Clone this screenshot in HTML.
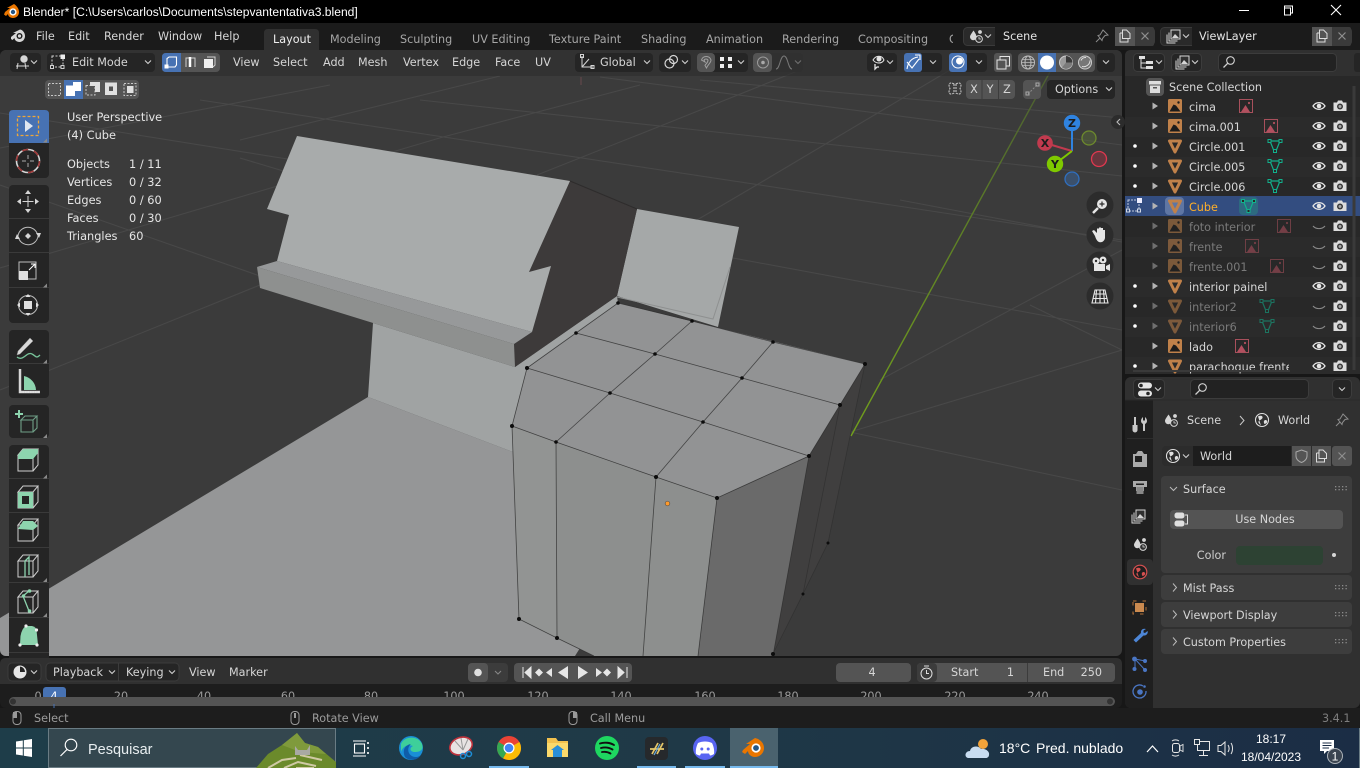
<!DOCTYPE html>
<html><head><meta charset="utf-8"><title>Blender</title>
<style>
html,body{margin:0;padding:0;background:#161616;width:1360px;height:768px;overflow:hidden}
svg{position:absolute;left:0;top:0;display:block}
text{font-family:"DejaVu Sans",sans-serif;font-size:11.2px;fill:#d6d6d6}
.w text,text.w{font-family:"Liberation Sans",sans-serif}
.dim{fill:#9c9c9c}
.hd{fill:#a6a6a6}
.sm{font-size:11.35px;fill:#e6e6e6}
.ol{fill:none;stroke:#d8d8d8;stroke-width:1}
.ch{fill:none;stroke:#d0d0d0;stroke-width:1.1}
</style></head><body>
<svg width="1360" height="768" viewBox="0 0 1360 768" xmlns="http://www.w3.org/2000/svg">
<defs>
<path id="ch" class="ch" d="M-3-1.5 0 1.5 3-1.5"/>
<path id="ar" d="M-2.5-3.5 3 0-2.5 3.5z" fill="#b4b4b4"/>
<g id="img"><rect x="-7" y="-7" width="14" height="14" rx="1.5" fill="#c0814a"/><path d="M-5.5 5.5-1.5-1.5 1-.5 5.5 5.5z" fill="#1c1c1c"/><circle cx="3.5" cy="-3.5" r="1.2" fill="#1c1c1c"/></g>
<g id="tri"><path d="M-5.5-5 5.500-5 0 6z" fill="none" stroke="#c0814a" stroke-width="3" stroke-linejoin="round"/></g>
<g id="sub"><rect x="-6.500" y="-6.500" width="13" height="13" fill="none" stroke="#a8505c" stroke-width="1"/><path d="M-5 6-.5-1 4 6z" fill="#b2505f"/><circle cx="3" cy="-3" r="1.1" fill="#b2505f"/></g>
<g id="msh"><path d="M-5-5H5L1 5H-1z" fill="none" stroke="#12b08c" stroke-width="1.2"/><rect x="-7" y="-6.500" width="3" height="3" fill="#282828" stroke="#12b08c"/><rect x="4" y="-6.500" width="3" height="3" fill="#282828" stroke="#12b08c"/><rect x="-1.500" y="3.500" width="3" height="3" fill="#282828" stroke="#12b08c"/></g>
<g id="eye"><path d="M-6 0C-3-4.500 3-4.500 6 0 3 4.500-3 4.500-6 0z" fill="none" stroke="#e6e6e6" stroke-width="1.300"/><circle r="2.300" fill="#e6e6e6"/></g>
<path id="eyc" d="M-6-1C-3 2.500 3 2.500 6-1" fill="none" stroke="#8a8a8a" stroke-width="1.100"/>
<g id="cam"><path d="M-6.500-3.500H-3L-2-5.500H2L3-3.500H6.500V5H-6.500z" fill="#dcdcdc"/><circle cy=".5" r="3" fill="#3a3a3a"/><circle cy=".5" r="1.500" fill="#a8a8a8"/></g>
<g id="mouse"><rect x="-4" y="-6.500" width="8" height="13" rx="3.500" fill="none" stroke="#9a9a9a"/></g>
<g id="vdots" fill="#8c8c8c"><rect x="0" y="0" width="1.300" height="1.300"/><rect x="3.500" y="0" width="1.300" height="1.300"/><rect x="7" y="0" width="1.300" height="1.300"/><rect x="10.500" y="0" width="1.300" height="1.300"/><rect x="0" y="3" width="1.300" height="1.300"/><rect x="3.500" y="3" width="1.300" height="1.300"/><rect x="7" y="3" width="1.300" height="1.300"/><rect x="10.500" y="3" width="1.300" height="1.300"/></g>
<g id="globe"><circle r="6.500" fill="none" stroke="#e0e0e0" stroke-width="1.100"/><path d="M-4-3.500C-1-5 1-4 .5-2-.5 0-3 0-3.500 1.500-4 3-2 4-1 5.500M3 0C5 0 5.500 1 5 2.500 4 4 2 4.500 2 3 1.500 1.500 2 .5 3 0z" fill="#e0e0e0"/></g>
<g id="sceneic"><path d="M-2.500-5.500C-.5-2.500.5-1 .5 1A3.200 3.200 0 0 1-6 1C-6-1-4-3-2.500-5.500z" fill="#d6d6d6"/><circle cx="4" cy="-4" r="1.900" fill="#d6d6d6"/><circle cx="3" cy="3" r="3.400" fill="#303030" stroke="#d6d6d6"/><path d="M3 1V3H5" fill="none" stroke="#d6d6d6" stroke-width=".8"/></g>
<g id="copy"><path d="M-5-3H-2.500M-5-3V6H3V2.500M-2.500-6H1.500L5-2.500V2.500H-2.500z" fill="none" stroke="#dcdcdc"/></g>
<g id="x"><path d="M-3.500-3.500 3.500 3.500M3.500-3.500-3.500 3.500" stroke="#8f8f8f" stroke-width="1.200"/></g>
<g id="pin"><path d="M1-6 6-1 3-.5 .5 2.500 0 4.500-4-.5-2-1-.5-3.500zM-2 2-6 6" fill="none" stroke="#8c8c8c"/></g>
<g id="layers"><rect x="-3" y="-6" width="9" height="9" fill="#303030" stroke="#d6d6d6"/><path d="M-5-3.500V5H3.500M-7-1.500V7H1.500" fill="none" stroke="#d6d6d6"/><path d="M-2 2 1-2 3 0 5 2z" fill="#d6d6d6"/></g>
<g id="lens"><circle cx="1.500" cy="-1.500" r="3.800" fill="none" stroke="#d0d0d0" stroke-width="1.100"/><path d="M-1.300 1.300-5.500 5.500" stroke="#d0d0d0" stroke-width="1.300"/></g>
<path id="cube" d="M-10-6H5L10-12H-5zM-10-6V10H5V-6M5 10 10 4V-12" fill="none" stroke="#cfcfcf" stroke-width="1"/>
<clipPath id="vp"><rect x="0" y="50" width="1122" height="606" rx="6"/></clipPath>
<clipPath id="sb"><rect x="49" y="729" width="287" height="39"/></clipPath>
<clipPath id="rul"><rect x="0" y="684" width="1122" height="13"/></clipPath>
<linearGradient id="tb" x1="0" x2="1" y1="0" y2="0"><stop offset="0" stop-color="#1e3d49"/><stop offset=".5" stop-color="#1f3947"/><stop offset="1" stop-color="#1b2d45"/></linearGradient>
<linearGradient id="gl" x1="0" x2="0" y1="0" y2="1"><stop offset="0" stop-color="#4a5a34"/><stop offset=".45" stop-color="#5d7f26"/><stop offset="1" stop-color="#72a01c"/></linearGradient>
</defs>

<!-- frame -->
<rect width="1360" height="768" fill="#171717"/>
<rect width="1360" height="23" fill="#000"/>
<rect y="23" width="1360" height="27" fill="#1b1b1b"/>

<!-- viewport -->
<g clip-path="url(#vp)">
<rect y="50" width="1122" height="606" fill="#3b3b3b"/>
<g stroke="#484848" stroke-width="1.100" fill="none">
<path d="M0 113 300 161M0 185 300 290M240 158 300 176M200 100 1122 240M420 100 1122 176M717 255 1122 330M850 432 1122 490M700 80 1122 118M600 77 1122 145M900 200 1122 242M1030 305 1122 350"/>
<path d="M0 148 330 85M240 140 500 76M50 370 260 285M0 390 50 370M0 268 443 137 640 85M537 175 663 125 800 70M697 220 760 183 950 70M850 432 1122 350M880 380 1122 250"/>
</g>
<path d="M851 436 1062 50" stroke="url(#gl)" stroke-width="1.400"/>
<path d="M581 77V85" stroke="#6a4a4e"/>
<rect y="50" width="1122" height="26" fill="#2f2f2f" opacity=".72"/>
<!-- floor -->
<path d="M368 397 513 452 519 619 557 638 594 656H0V618z" fill="#959697"/>
<path d="M575 656 580 648 594 656z" fill="#3c3c3c"/>
<!-- pillar -->
<path d="M373 323 515 367 617 296 618 303 527 368 512 426 513 452 368 397z" fill="#a0a3a3"/>
<!-- plate -->
<path d="M637 209 739 227 718 327 617 296z" fill="#a5a8a8"/>
<path d="M617 297 713 319 730 267" fill="none" stroke="#8e9090"/>
<!-- dark side -->
<path d="M570 181 637 209 617 296 515 367 514 344 532 332 551 266 529 272z" fill="#3d3a3a"/>
<path d="M570 181 637 209" stroke="#2e2c2c"/>
<!-- upper -->
<path d="M297 136 570 181 529 272 551 266 532 332 277 261 289 215 267 209z" fill="#a8abab"/>
<path d="M257 267 277 261 532 332 514 344z" fill="#97999a"/>
<path d="M257 267 514 344 515 367 260 288z" fill="#8e908f"/>
<!-- box -->
<path d="M618 303 865 364 840 405 809 456 717 498 656 477 556 442 512 426 527 368z" fill="#929394"/>
<path d="M512 426 556 442 656 477 717 498 698 656H594L557 638 519 619z" fill="#8d8f8e"/>
<path d="M512 426 556 442 557 638 519 619z" fill="#929493"/>
<path d="M717 498 809 456 773 656H698z" fill="#6a6a6a"/>
<path d="M809 456 840 405 865 364 828 543 803 594 773 656z" fill="#403f3f"/>
<g fill="none" stroke="#303030" stroke-width=".8" opacity=".8">
<path d="M618 303 692 321 773 342 865 364 840 405 809 456 717 498 656 477 556 442 512 426 527 368 576 333z"/>
<path d="M576 333 655 354 742 378 840 405M527 368 610 393 703 422 809 456M692 321 655 354 610 393 556 442M773 342 742 378 703 422 656 477"/>
<path d="M512 426 519 619 557 638 594 656M556 442 557 638M656 477 643 656M717 498 698 656M809 456 773 656M840 405 803 594 773 654M865 364 828 543 803 594"/>
</g>
<g fill="#0c0c0c">
<circle cx="618" cy="303" r="1.800"/><circle cx="692" cy="321" r="1.800"/><circle cx="773" cy="342" r="1.800"/><circle cx="865" cy="364" r="2"/>
<circle cx="576" cy="333" r="1.800"/><circle cx="655" cy="354" r="1.800"/><circle cx="742" cy="378" r="1.800"/><circle cx="840" cy="405" r="2"/>
<circle cx="527" cy="368" r="2"/><circle cx="610" cy="393" r="1.800"/><circle cx="703" cy="422" r="1.800"/><circle cx="809" cy="456" r="2"/>
<circle cx="512" cy="426" r="2"/><circle cx="556" cy="442" r="1.800"/><circle cx="656" cy="477" r="2"/><circle cx="717" cy="498" r="2"/>
<circle cx="519" cy="619" r="2"/><circle cx="557" cy="638" r="2"/><circle cx="773" cy="654" r="2"/><circle cx="803" cy="594" r="1.500"/><circle cx="828" cy="543" r="1.500"/>
</g>
<circle cx="667.500" cy="503.500" r="2.300" fill="#ff9a2a" stroke="#555" stroke-width=".7"/>
</g>

<!-- title bar -->
<g transform="translate(11,11)"><path d="M-6 1-1-3-4-3 3-7C6-5 8-2 8 1 8 5 5 7 2 7-1 7-3 5-3 3L-5 5-7 3.500z" fill="#ea7600"/><circle cx="2" cy="1" r="3.600" fill="#fff"/><circle cx="2" cy="1" r="2.200" fill="#265787"/></g>
<text class="w" x="23" y="16" style="font-size:12.100px;fill:#fff">Blender* [C:\Users\carlos\Documents\stepvantentativa3.blend]</text>
<path d="M1239 10.500H1249" stroke="#fff"/>
<path d="M1284.500 8.500V6.500H1292.500V13.500H1290.500M1284.500 8.500H1290.500V15.500H1284.500z" transform="translate(0,-.5)" fill="none" stroke="#fff"/>
<path d="M1331 5 1341 15M1341 5 1331 15" stroke="#fff" stroke-width="1.100"/>

<!-- top bar -->
<g transform="translate(18,36)"><path d="M-7 1-2-3-5-3 2-6.500C5-6 7-3 7 0 7 3.500 4.500 6 1.500 6-1.500 6-3.500 4-3.500 2L-5.500 4-7 3z" fill="#d8d8d8"/><circle cx="1.500" cy="0" r="3" fill="#1b1b1b"/><circle cx="1.500" cy="0" r="1.600" fill="#d8d8d8"/></g>
<text x="36" y="40">File</text><text x="68" y="40">Edit</text><text x="104" y="40">Render</text><text x="158" y="40">Window</text><text x="214" y="40">Help</text>
<path d="M264 50V33Q264 29 268 29H315Q319 29 319 33V50z" fill="#303030"/>
<text x="273" y="43" style="fill:#eee">Layout</text>
<g class="hd"><text class="hd" x="330" y="43">Modeling</text><text class="hd" x="400" y="43">Sculpting</text><text class="hd" x="472" y="43">UV Editing</text><text class="hd" x="549" y="43">Texture Paint</text><text class="hd" x="641" y="43">Shading</text><text class="hd" x="706" y="43">Animation</text><text class="hd" x="782" y="43">Rendering</text><text class="hd" x="858" y="43">Compositing</text><text class="hd" x="949" y="43">G</text></g>
<rect x="953" y="26" width="10" height="22" fill="#1b1b1b"/>
<!-- scene field -->
<rect x="963.500" y="27.500" width="191" height="18" rx="4" fill="#2a2a2a" stroke="#3a3a3a"/>
<rect x="995" y="27" width="120" height="19" fill="#1b1b1b"/>
<rect x="1115" y="27" width="20" height="19" fill="#545454"/>
<rect x="1135" y="27" width="19" height="19" fill="#3a3a3a" rx="2"/>
<use href="#sceneic" x="976" y="36"/><use href="#ch" x="988" y="36"/>
<text x="1003" y="40" style="fill:#e4e4e4">Scene</text>
<use href="#pin" x="1102" y="36"/><use href="#copy" x="1125" y="36"/><use href="#x" x="1145" y="36"/>
<rect x="1160.500" y="27.500" width="191" height="18" rx="4" fill="#2a2a2a" stroke="#3a3a3a"/>
<rect x="1192" y="27" width="120" height="19" fill="#1b1b1b"/>
<rect x="1312" y="27" width="20" height="19" fill="#545454"/>
<rect x="1332" y="27" width="19" height="19" fill="#3a3a3a" rx="2"/>
<use href="#layers" x="1174" y="36"/><use href="#ch" x="1186" y="36"/>
<text x="1199" y="40" style="fill:#e4e4e4">ViewLayer</text>
<use href="#copy" x="1322" y="36"/><use href="#x" x="1342" y="36"/>

<!-- viewport header -->
<g fill="#252525">
<rect x="10" y="53" width="31" height="19" rx="4"/>
<rect x="47" y="53" width="108" height="19" rx="4"/>
<rect x="575" y="53" width="78" height="19" rx="4"/>
<rect x="659" y="53" width="32" height="19" rx="4"/>
<rect x="697" y="53" width="51" height="19" rx="4"/>
<rect x="753" y="53" width="50" height="19" rx="4" fill="#303030"/>
<rect x="867" y="53" width="30" height="19" rx="4"/>
<rect x="904" y="53" width="38" height="19" rx="4"/>
<rect x="949" y="53" width="38" height="19" rx="4"/>
<rect x="1097" y="53" width="18" height="19" rx="4"/>
</g>
<rect x="697" y="53" width="18" height="19" rx="4" fill="#545454"/>
<rect x="753" y="53" width="19" height="19" rx="4" fill="#545454"/>
<rect x="904" y="53" width="18" height="19" rx="3" fill="#4772b3"/>
<rect x="949" y="53" width="18" height="19" rx="3" fill="#4772b3"/>
<rect x="994" y="53" width="18" height="19" rx="3" fill="#545454"/>
<rect x="1018" y="53" width="77" height="19" rx="4" fill="#545454"/>
<rect x="1038" y="53" width="18" height="19" fill="#4772b3"/>
<rect x="162" y="53" width="58" height="19" rx="4" fill="#545454"/>
<path d="M166 53H181V72H166Q162 72 162 68V57Q162 53 166 53z" fill="#4772b3"/>
<!-- editor type viewport icon -->
<g transform="translate(22,62)" fill="none" stroke="#d6d6d6"><path d="M-6 4H7M-4 1-5 7M3 1 4 7"/><circle cx="2" cy="-3" r="3.200" fill="#d6d6d6"/></g><use href="#ch" x="34" y="62"/>
<g transform="translate(58,62)"><rect x="-6" y="-6" width="11" height="11" fill="none" stroke="#cfcfcf" stroke-dasharray="2 1.500"/><rect x="2.500" y="-7.500" width="4.500" height="4.500" fill="#eee"/><rect x="-7.500" y="3.500" width="3" height="3" fill="#252525" stroke="#cfcfcf"/><rect x="3" y="3.500" width="3" height="3" fill="#252525" stroke="#cfcfcf"/></g>
<text x="72" y="66">Edit Mode</text><use href="#ch" x="148" y="62"/>
<!-- select modes -->
<path d="M167 67V58.500L169 57H176.500V65L175 67z" fill="none" stroke="#fff" stroke-width="1.100"/><rect x="164.500" y="64.500" width="4" height="4" fill="#fff"/>
<path d="M186 67V58H195V67" fill="none" stroke="#d0d0d0"/><path d="M190 57V67" stroke="#fff" stroke-width="2.500"/><rect x="186" y="57" width="10" height="3" fill="none"/>
<rect x="204" y="59" width="9" height="9" fill="#f0f0f0"/><path d="M207 57H215V65L213 67" fill="none" stroke="#d0d0d0"/>
<text x="233" y="66">View</text><text x="273" y="66">Select</text><text x="323" y="66">Add</text><text x="358" y="66">Mesh</text><text x="403" y="66">Vertex</text><text x="452" y="66">Edge</text><text x="495" y="66">Face</text><text x="535" y="66">UV</text>
<!-- Global -->
<g transform="translate(587,62)" fill="none" stroke="#d6d6d6"><path d="M-5-6V5H6M-5 5 2-3"/><rect x="-6.500" y="-7.500" width="3" height="3"/><rect x="4" y="3.500" width="3" height="3"/></g>
<text x="600" y="66">Global</text><use href="#ch" x="647" y="62"/>
<g transform="translate(671,62)" fill="none" stroke="#d6d6d6" stroke-width="1.200"><circle cx="-1.500" cy="1.500" r="4.500"/><circle cx="2.500" cy="-2.500" r="4"/></g><use href="#ch" x="685" y="62"/>
<path d="M701.500 60A5 5 0 0 1 711 60C711 63 708 64 706.500 68L705 65.500C706 63.500 708 63 708 60A2.500 2.500 0 0 0 704 60L705 62z" fill="none" stroke="#a0a0a0"/>
<g fill="#eee"><rect x="720" y="57" width="4" height="4"/><rect x="728" y="57" width="4" height="4"/><rect x="720" y="64" width="4" height="4"/><rect x="728" y="64" width="4" height="4"/></g><use href="#ch" x="741" y="62"/>
<circle cx="763" cy="62.500" r="5.500" fill="none" stroke="#9a9a9a"/><circle cx="763" cy="62.500" r="1.800" fill="#aaa"/>
<path d="M776 69C780 69 780 56 784 56 788 56 788 69 792 69" fill="none" stroke="#777"/><use href="#ch" x="798" y="62" opacity=".4"/>
<!-- overlays etc -->
<g transform="translate(878,62)"><path d="M-5-2C-2-7 4-7 6-2 4 2-2 2-5-2z" fill="none" stroke="#e6e6e6"/><circle cx="1" cy="-3" r="2.500" fill="#e6e6e6"/><path d="M-3 2V7L-1 5H1" fill="none" stroke="#e6e6e6" stroke-width="1.300"/></g><use href="#ch" x="890" y="62"/>
<g transform="translate(913,62)" fill="none" stroke="#fff" stroke-width="1.100"><path d="M-6 7C-5 0-1-4 5-5M-6 0-1 6 6-3"/><path d="M2-7H7V-2"/></g><use href="#ch" x="933" y="62"/>
<g transform="translate(958,62)"><circle r="6" fill="none" stroke="#fff"/><circle cx="1.500" cy="-1" r="3.500" fill="#fff"/></g><use href="#ch" x="979" y="62"/>
<g fill="none" stroke="#e4e4e4"><path d="M997 60V69H1006V60z"/><path d="M1000 60V56.500H1009.500V66H1006"/></g>
<g transform="translate(1028,62.500)" fill="none" stroke="#bcbcbc"><circle r="6.500"/><ellipse rx="3" ry="6.500"/><path d="M-6.500 0H6.500M-5.500-3H5.500M-5.500 3H5.500" stroke-width=".7"/></g>
<circle cx="1047" cy="62.500" r="7" fill="#fff"/>
<g transform="translate(1066,62.500)"><circle r="6.500" fill="#9a9a9a" stroke="#ccc"/><path d="M0-6.500A6.500 6.500 0 0 1 6.500 0H0z" fill="#3a3a3a"/><path d="M0 0H6.500A6.500 6.500 0 0 1-4 5z" fill="#7a7a7a"/></g>
<g transform="translate(1085,62.500)"><circle r="6.500" fill="#777" stroke="#ccc"/><path d="M-4-2A5 5 0 0 1 1-5M-3 4C1 5 5 2 5-2" fill="none" stroke="#ddd"/></g>
<use href="#ch" x="1106" y="62"/>

<!-- second row -->
<rect x="45" y="80" width="94" height="19" rx="4" fill="#545454"/>
<rect x="64" y="80" width="19" height="19" fill="#4772b3"/>
<rect x="48.500" y="83.500" width="12" height="12" fill="none" stroke="#c8c8c8" stroke-dasharray="2 1.500"/>
<path d="M66 85.500H73V82H81V91H75V96H66z" fill="#fff"/>
<rect x="86" y="85.500" width="9" height="9.500" fill="none" stroke="#c8c8c8" stroke-dasharray="2 1.500"/><path d="M90 82H100V92H95V86H90z" fill="#e0e0e0"/>
<path d="M105 82.500H117V95H105zM109 86.500V91H113V86.500z" fill="#e0e0e0" fill-rule="evenodd"/>
<rect x="124" y="83.500" width="12" height="12" fill="none" stroke="#c8c8c8" stroke-dasharray="2 1.500"/><rect x="127" y="86" width="6.500" height="7" fill="#e0e0e0"/>
<g fill="none" stroke="#cfcfcf" stroke-dasharray="2 1"><path d="M954 84C949 81 948 85 950 88.500 948 92 949 96 954 93zM956 84C961 81 962 85 960 88.500 962 92 961 96 956 93z"/></g>
<rect x="966" y="80" width="49" height="19" rx="4" fill="#545454"/>
<path d="M982 80V99M998.500 80V99" stroke="#3c3c3c"/>
<text x="974" y="93" text-anchor="middle">X</text><text x="990" y="93" text-anchor="middle">Y</text><text x="1007" y="93" text-anchor="middle">Z</text>
<rect x="1023" y="80" width="18" height="19" rx="4" fill="#545454"/>
<path d="M1028 94 1037 85" stroke="#8a8a8a" stroke-dasharray="2 1.500"/><rect x="1026" y="92" width="3" height="3" fill="none" stroke="#aaa"/><rect x="1036" y="83" width="3" height="3" fill="none" stroke="#aaa"/>
<rect x="1047" y="80" width="68" height="19" rx="4" fill="#252525"/>
<text x="1055" y="93">Options</text><use href="#ch" x="1109" y="89"/>

<!-- toolbar -->
<g fill="#252525">
<rect x="9" y="110" width="40" height="68" rx="4"/>
<rect x="9" y="185" width="40" height="138" rx="4"/>
<rect x="9" y="330" width="40" height="68" rx="4"/>
<rect x="9" y="405" width="40" height="33" rx="4"/>
<rect x="9" y="445" width="40" height="220" rx="4"/>
</g>
<path d="M13 110H45Q49 110 49 114V143H9V114Q9 110 13 110z" fill="#4772b3"/>
<path d="M9 218.500H49M9 252.500H49M9 287.500H49M9 363.500H49M9 478.500H49M9 512.500H49M9 547.500H49M9 582.500H49M9 617.500H49M9 652.500H49" stroke="#3a3a3a"/>
<rect x="17.500" y="116.500" width="21" height="19" fill="none" stroke="#eda73a" stroke-width="1.300" stroke-dasharray="3 2"/>
<path d="M25 120V132L33 126z" fill="#dfe6f0"/>
<circle cx="28" cy="161" r="11.500" fill="none" stroke="#d8d8d8" stroke-width="1.600"/><circle cx="28" cy="161" r="11.500" fill="none" stroke="#a03838" stroke-width="1.600" stroke-dasharray="6 6"/>
<path d="M28 155V159M28 163V167M22 161H26M30 161H34" stroke="#aaa"/>
<g fill="#d6d6d6"><path d="M28 190 31 194H25zM28 213 31 209H25zM17 201.500 21 198.500V204.500zM39 201.500 35 198.500V204.500z"/><path d="M27.500 196H28.500V207H27.500zM22.500 201H33.500V202H22.500z"/></g>
<g transform="translate(28,236)"><path d="M0-3 3 0 0 3-3 0z" fill="#d6d6d6"/><path d="M-10 0A10 10 0 0 1 9-3M10 0A10 10 0 0 1-9 3" fill="none" stroke="#bdbdbd"/><path d="M-11-2-8 3-13 3zM11 2 8-3 13-3z" fill="#d6d6d6"/></g>
<rect x="19" y="262" width="17" height="17" fill="none" stroke="#bdbdbd"/><rect x="19" y="271" width="9" height="9" fill="#e0e0e0"/><path d="M29 270 35 264M31 264H35V268" fill="none" stroke="#fff"/>
<g transform="translate(28,305)"><circle r="9.500" fill="none" stroke="#bdbdbd"/><rect x="-4" y="-4" width="8" height="8" fill="#e0e0e0"/><path d="M0-11 2.500-8H-2.500zM0 11 2.500 8H-2.500zM-11 0-8 2.500V-2.500zM11 0 8 2.500V-2.500z" fill="#e0e0e0"/></g>
<path d="M18 351 30 338 33 341 20 354 17 355z" fill="#d8d8d8" stroke="#8a8a8a" stroke-width=".5"/><path d="M17 357C23 362 27 351 32 354 36 356 36 359 40 355" fill="none" stroke="#78c39a" stroke-width="1.300"/>
<path d="M20 369V392H40" fill="none" stroke="#d6d6d6" stroke-width="2.500"/><path d="M24 376A15 15 0 0 1 36 390H24z" fill="#8dd4ae"/><path d="M20 392H40" stroke="#e0e0e0" stroke-width="2" stroke-dasharray="1.500 1"/>
<!-- add cube etc -->
<g transform="translate(29,424)"><path d="M-8-4H4L8-8H-4zM-8-4V8H4V-4M4 8 8 4V-8" fill="none" stroke="#6f9f87" stroke-width="1.100"/></g>
<path d="M19 410V418M15 414H23" stroke="#8dd4ae" stroke-width="2"/>
<use href="#cube" x="28" y="461"/><path d="M18 459V455L23 449H38V453L33 459z" fill="#8dd4ae"/>
<use href="#cube" x="28" y="498"/><path d="M18 492H33V508H18zM22 496V504H29V496z" fill="#8dd4ae" fill-rule="evenodd"/>
<use href="#cube" x="28" y="531"/><path d="M18 529 23 521H33L38 526 33 530z" fill="#8dd4ae"/>
<use href="#cube" x="28" y="567"/><path d="M25 577V561L29 557V575" fill="none" stroke="#8dd4ae" stroke-width="1.300"/>
<use href="#cube" x="28" y="603"/><path d="M23 596 29 591M23 596 29 611" fill="none" stroke="#8dd4ae" stroke-width="1.300"/><circle cx="29.500" cy="591" r="1.800" fill="#8dd4ae"/><circle cx="23.500" cy="596" r="1.800" fill="#8dd4ae"/><circle cx="29.500" cy="611" r="1.800" fill="#8dd4ae"/>
<path d="M26 626H32Q36 627 36.500 630L38 645H20L20.500 636Q22 628 26 626z" fill="#8dd4ae"/><g fill="#eee"><circle cx="26" cy="626" r="1.600"/><circle cx="36.500" cy="630" r="1.600"/><circle cx="20" cy="645" r="1.600"/><circle cx="37" cy="645" r="1.600"/></g>
<g fill="#8a8a8a"><path d="M47 138.500V142.500H43zM47 283.500V287.500H43zM47 359.500V363.500H43zM47 434V438H43zM47 474.500V478.500H43zM47 578V582H43zM47 613V617H43z"/></g>

<!-- overlay text -->
<g>
<text class="sm" x="67" y="121">User Perspective</text><text class="sm" x="67" y="139">(4) Cube</text>
<text class="sm" x="67" y="168">Objects</text><text class="sm" x="129" y="168">1 / 11</text>
<text class="sm" x="67" y="186">Vertices</text><text class="sm" x="129" y="186">0 / 32</text>
<text class="sm" x="67" y="204">Edges</text><text class="sm" x="129" y="204">0 / 60</text>
<text class="sm" x="67" y="222">Faces</text><text class="sm" x="129" y="222">0 / 30</text>
<text class="sm" x="67" y="240">Triangles</text><text class="sm" x="129" y="240">60</text>
</g>

<!-- gizmo -->
<circle cx="1089" cy="138" r="7" fill="#5a6e3a" fill-opacity=".45" stroke="#6d8a2d" stroke-width="1.300"/>
<circle cx="1099" cy="159" r="7.500" fill="#7c3540" fill-opacity=".7" stroke="#e0384f" stroke-width="1.300"/>
<circle cx="1072" cy="179" r="7" fill="#3c5a80" fill-opacity=".7" stroke="#2f6fc0" stroke-width="1.300"/>
<path d="M1072 151V125" stroke="#2f83e0" stroke-width="2"/><path d="M1072 151 1045 143" stroke="#c13a4e" stroke-width="2"/><path d="M1072 151 1055 164" stroke="#7fc900" stroke-width="2"/>
<circle cx="1045" cy="143" r="7.800" fill="#c13a4e"/><circle cx="1055" cy="164" r="8.200" fill="#7fc900"/><circle cx="1072" cy="123" r="8.200" fill="#2f83e0"/>
<text x="1045" y="147" text-anchor="middle" style="font-weight:bold;font-size:11px;fill:#1c1c1c">X</text>
<text x="1055" y="168" text-anchor="middle" style="font-weight:bold;font-size:11px;fill:#1c1c1c">Y</text>
<text x="1072" y="127" text-anchor="middle" style="font-weight:bold;font-size:11px;fill:#1c1c1c">Z</text>
<g fill="#2c2c2c"><circle cx="1100" cy="205" r="13.500"/><circle cx="1100" cy="235" r="13.500"/><circle cx="1100" cy="265" r="13.500"/><circle cx="1100" cy="296" r="13.500"/></g>
<g><circle cx="1102" cy="204" r="5" fill="#e6e6e6"/><path d="M1099.500 204H1104.500M1102 201.500V206.500" stroke="#2c2c2c" stroke-width="1.200"/><path d="M1098 208 1093 213" stroke="#e6e6e6" stroke-width="2.500"/></g>
<path d="M1095 236 1092 231 1094 230 1097 233V228.500H1099V232V227.500H1101V232V228H1103V233V230H1105V238C1104.500 241 1102 243 1099 242 1097 241 1096 239 1095 236z" fill="#e6e6e6"/>
<g fill="#e6e6e6"><circle cx="1096" cy="261" r="3.500"/><circle cx="1103" cy="260" r="3.500"/><rect x="1094" y="264" width="11" height="7"/><path d="M1106 266 1110 264V271L1106 269z"/></g>
<circle cx="1096" cy="261" r="1.200" fill="#2c2c2c"/><circle cx="1103" cy="260" r="1.200" fill="#2c2c2c"/>
<path d="M1095 290H1105L1108 303H1092zM1100 290V303M1096.500 290 1095.500 303M1103.500 290 1104.500 303M1094 294H1106M1093 298.500H1107" fill="none" stroke="#e6e6e6" stroke-width="1.100"/>
<circle cx="1118" cy="122" r="7" fill="#2c2c2c"/><path d="M1120 119 1117 122 1120 125" fill="none" stroke="#bbb" stroke-width="1.100"/>

<!-- outliner -->
<rect x="1125" y="50" width="235" height="324" rx="6" fill="#282828"/>
<path d="M1131 50H1360V76H1125V56Q1125 50 1131 50z" fill="#303030"/>
<g fill="#2b2b2b"><rect x="1125" y="117" width="235" height="20"/><rect x="1125" y="157" width="235" height="20"/><rect x="1125" y="237" width="235" height="20"/><rect x="1125" y="277" width="235" height="20"/><rect x="1125" y="317" width="235" height="20"/><rect x="1125" y="357" width="235" height="17"/></g>
<rect x="1125" y="196" width="235" height="20" fill="#334d80"/>
<rect x="1133.500" y="53.500" width="31" height="18" rx="4" fill="#252525" stroke="#3c3c3c"/>
<rect x="1171.500" y="53.500" width="30" height="18" rx="4" fill="#252525" stroke="#3c3c3c"/>
<rect x="1218.500" y="53.500" width="118" height="18" rx="4" fill="#222" stroke="#3c3c3c"/>
<rect x="1354" y="53" width="8" height="19" rx="3" fill="#252525"/>
<g fill="#e0e0e0"><rect x="1139" y="56" width="6" height="3"/><rect x="1146" y="61" width="7" height="3"/><rect x="1146" y="66" width="7" height="3"/></g><path d="M1141 59V68H1146M1141 63H1146" fill="none" stroke="#e0e0e0"/><use href="#ch" x="1159" y="62"/>
<use href="#layers" x="1183" y="62"/><use href="#ch" x="1195" y="62"/><use href="#lens" x="1229" y="62"/>
<rect x="1146" y="78" width="18" height="18" rx="4" fill="#555"/><rect x="1149" y="81" width="12" height="3.500" fill="#ddd"/><path d="M1150 85.500H1160V93H1150z" fill="#ddd"/><rect x="1153" y="87" width="4" height="1.500" fill="#555"/>
<text x="1169" y="91">Scene Collection</text>
<!-- rows -->
<g fill="#fff"><circle cx="1135" cy="146" r="1.800"/><circle cx="1135" cy="166" r="1.800"/><circle cx="1135" cy="186" r="1.800"/><circle cx="1135" cy="286" r="1.800"/><circle cx="1135" cy="306" r="1.800"/><circle cx="1135" cy="326" r="1.800"/><circle cx="1135" cy="366" r="1.800"/></g>
<g transform="translate(1155,0)"><use href="#ar" y="106"/><use href="#ar" y="126"/><use href="#ar" y="146"/><use href="#ar" y="166"/><use href="#ar" y="186"/><use href="#ar" y="206"/><use href="#ar" y="346"/><use href="#ar" y="286"/><use href="#ar" y="366"/><g opacity=".5"><use href="#ar" y="226"/><use href="#ar" y="246"/><use href="#ar" y="266"/><use href="#ar" y="306"/><use href="#ar" y="326"/></g></g>
<g transform="translate(1175,0)"><use href="#img" y="106"/><use href="#img" y="126"/><use href="#tri" y="146"/><use href="#tri" y="166"/><use href="#tri" y="186"/>
<rect x="-10" y="197" width="19" height="18" rx="4" fill="#5f76a3"/><use href="#tri" y="206"/>
<g opacity=".55"><use href="#img" y="226"/><use href="#img" y="246"/><use href="#img" y="266"/><use href="#tri" y="306"/><use href="#tri" y="326"/></g><use href="#tri" y="286"/><use href="#img" y="346"/><use href="#tri" y="366"/></g>
<text x="1189" y="111">cima</text><text x="1189" y="131">cima.001</text><text x="1189" y="151">Circle.001</text><text x="1189" y="171">Circle.005</text><text x="1189" y="191">Circle.006</text>
<text x="1189" y="211" style="fill:#ffaf29">Cube</text>
<g><text x="1189" y="231" style="fill:#7a7a7a">foto interior</text><text x="1189" y="251" style="fill:#7a7a7a">frente</text><text x="1189" y="271" style="fill:#7a7a7a">frente.001</text></g>
<text x="1189" y="291">interior painel</text>
<text x="1189" y="311" style="fill:#7a7a7a">interior2</text><text x="1189" y="331" style="fill:#7a7a7a">interior6</text>
<text x="1189" y="351">lado</text><text x="1189" y="371">parachoque frente</text>
<rect x="1289" y="358" width="20" height="16" fill="#2b2b2b"/>
<use href="#sub" x="1246" y="106"/><use href="#sub" x="1271" y="126"/><use href="#msh" x="1275" y="146"/><use href="#msh" x="1275" y="166"/><use href="#msh" x="1275" y="186"/>
<rect x="1239" y="197" width="19" height="18" rx="4" fill="#2d6a80"/><use href="#msh" x="1248.500" y="206"/>
<g opacity=".55"><use href="#sub" x="1284" y="226"/><use href="#sub" x="1252" y="246"/><use href="#sub" x="1277" y="266"/><use href="#msh" x="1267" y="306"/><use href="#msh" x="1267" y="326"/></g><use href="#sub" x="1242" y="346"/>
<g transform="translate(1319,0)"><use href="#eye" y="106"/><use href="#eye" y="126"/><use href="#eye" y="146"/><use href="#eye" y="166"/><use href="#eye" y="186"/><use href="#eye" y="206"/><use href="#eyc" y="227"/><use href="#eyc" y="247"/><use href="#eyc" y="267"/><use href="#eye" y="286"/><use href="#eyc" y="307"/><use href="#eyc" y="327"/><use href="#eye" y="346"/><use href="#eye" y="366"/></g>
<g transform="translate(1340,0)"><use href="#cam" y="106"/><use href="#cam" y="126"/><use href="#cam" y="146"/><use href="#cam" y="166"/><use href="#cam" y="186"/><use href="#cam" y="206"/><use href="#cam" y="226"/><use href="#cam" y="246"/><use href="#cam" y="266"/><use href="#cam" y="286"/><use href="#cam" y="306"/><use href="#cam" y="326"/><use href="#cam" y="346"/><use href="#cam" y="366"/></g>
<g transform="translate(1135,206)"><rect x="-7" y="-6" width="11" height="11" fill="none" stroke="#bfc8da" stroke-dasharray="2 1"/><rect x="2" y="-8" width="5" height="5" fill="#eef"/><rect x="-8.500" y="3" width="3" height="3" fill="#334d80" stroke="#cfd6e4"/><rect x="2.500" y="3" width="3" height="3" fill="#334d80" stroke="#cfd6e4"/></g>
<path d="M1133 371H1290" stroke="#3a3a3a" stroke-width="2"/>
<path d="M1354 86V370" stroke="#3a3a3a" stroke-width="3"/>

<!-- properties -->
<rect x="1125" y="377" width="235" height="331" rx="6" fill="#303030"/>
<path d="M1125 400V702Q1125 708 1131 708H1153V400z" fill="#1f1f1f"/>
<path d="M1125 400H1360" stroke="#2a2a2a"/>
<rect x="1133.500" y="379.500" width="31" height="19" rx="4" fill="#252525" stroke="#3c3c3c"/>
<rect x="1190.500" y="379.500" width="118" height="19" rx="4" fill="#222" stroke="#3c3c3c"/>
<rect x="1332.500" y="379.500" width="19" height="19" rx="4" fill="#252525" stroke="#3c3c3c"/>
<g fill="#e4e4e4"><rect x="1138" y="382.500" width="14" height="6" rx="3"/><rect x="1138" y="390.500" width="14" height="6" rx="3"/></g><circle cx="1141" cy="385.500" r="1.800" fill="#252525"/><circle cx="1148" cy="393.500" r="1.800" fill="#252525"/><use href="#ch" x="1158" y="389"/>
<use href="#lens" x="1201" y="389"/><use href="#ch" x="1342" y="389"/>
<!-- tabs -->
<rect x="1127" y="559" width="26" height="26" rx="4" fill="#303030"/>
<path d="M1127 438.500H1153" stroke="#2d2d2d"/>
<g fill="#c8c8c8"><path d="M1134 417H1136V425H1137.500V430A2 2 0 0 1 1132.500 430V425H1134zM1143 417C1142 418 1141 419 1141 421 1141 422.500 1142 423.500 1143 424V431H1145V424C1146 423.500 1147 422.500 1147 421 1147 419 1146 418 1145 417V420.500H1143z"/></g>
<path d="M1133 454H1147V467H1133z" fill="#aaa"/><rect x="1135" y="456" width="7" height="6" fill="#1f1f1f"/><path d="M1136 454 1138 451H1142L1144 454z" fill="#aaa"/>
<path d="M1133 481H1147V487H1144V491H1136V487H1133z" fill="#aaa"/><rect x="1136" y="483.500" width="8" height="1.500" fill="#1f1f1f"/><path d="M1136.500 487H1143.500V494H1136.500z" fill="#888"/>
<use href="#layers" x="1139" y="516"/>
<use href="#sceneic" x="1140" y="544"/>
<g transform="translate(1140,572)"><circle r="6.800" fill="#1f1f1f" stroke="#d65050" stroke-width="1.200"/><path d="M-4-3.500C-1-5 1-4 .5-2-.5 0-3 0-3.500 1.500-4 3-2 4-1 5.500M3 0C5 0 5.500 1 5 2.500 4 4 2 4.500 2 3 1.500 1.500 2 .5 3 0z" fill="#d65050"/></g>
<rect x="1133" y="601" width="13" height="13" fill="none" stroke="#b5733a" stroke-dasharray="3.500 6"/><rect x="1135" y="603" width="9" height="9" fill="#cb8a4f"/>
<path d="M1146 629C1143 628 1140.500 630 1141 633L1133.500 640 1136 642.500 1143.500 635.500C1146.500 636 1148.500 633 1147.500 631L1145 633 1143.500 632.500 1143.500 630.500z" fill="#4d86d6"/>
<g fill="#4a76c4"><circle cx="1134.500" cy="659" r="2.400"/><circle cx="1145" cy="661" r="2"/><circle cx="1134.500" cy="669" r="2"/><circle cx="1145" cy="670" r="2"/></g><path d="M1135 659 1145 661M1135 659V669M1135 659 1145 670" stroke="#4a76c4"/>
<circle cx="1140" cy="692" r="2.800" fill="#4a76c4"/><path d="M1146 691A6.500 6.500 0 1 1 1143 686" fill="none" stroke="#4a76c4" stroke-width="1.300"/><circle cx="1144.500" cy="686.500" r="1.300" fill="#4a76c4"/>
<!-- breadcrumb -->
<use href="#sceneic" x="1171" y="420"/>
<text x="1187" y="424">Scene</text>
<path d="M1240 416 1244 420.500 1240 425" fill="none" stroke="#c8c8c8"/>
<use href="#globe" x="1262" y="420"/><text x="1278" y="424">World</text>
<use href="#pin" x="1342" y="420"/>
<rect x="1162" y="446" width="190" height="20" rx="4" fill="#2c2c2c"/>
<rect x="1193" y="446" width="98" height="20" fill="#1d1d1d"/>
<rect x="1292" y="446" width="19" height="20" fill="#545454"/><rect x="1312" y="446" width="19" height="20" fill="#545454"/><rect x="1332" y="446" width="20" height="20" rx="3" fill="#545454"/>
<use href="#globe" x="1173" y="456"/><use href="#ch" x="1186" y="456"/>
<text x="1200" y="460">World</text>
<path d="M1301.500 450 1307 452V456C1307 459 1304.500 461.500 1301.500 462.500 1298.500 461.500 1296 459 1296 456V452z" fill="none" stroke="#a8a8a8"/>
<use href="#copy" x="1321.500" y="456"/><use href="#x" x="1342" y="456"/>
<!-- panels -->
<g fill="#3d3d3d"><rect x="1161" y="476" width="191" height="97" rx="4"/><rect x="1161" y="575" width="191" height="25" rx="4"/><rect x="1161" y="602" width="191" height="25" rx="4"/><rect x="1161" y="629" width="191" height="25" rx="4"/></g>
<path d="M1170 487 1173.500 490.500 1177 487" fill="none" stroke="#bbb"/>
<path d="M1173 583.500 1176.500 587.500 1173 591.500M1173 610.500 1176.500 614.500 1173 618.500M1173 637.500 1176.500 641.500 1173 645.500" fill="none" stroke="#bbb"/>
<text x="1183" y="493">Surface</text><text x="1183" y="592">Mist Pass</text><text x="1183" y="619">Viewport Display</text><text x="1183" y="646">Custom Properties</text>
<use href="#vdots" x="1335" y="486"/><use href="#vdots" x="1335" y="585"/><use href="#vdots" x="1335" y="612"/><use href="#vdots" x="1335" y="639"/>
<rect x="1170" y="510" width="173" height="19" rx="4" fill="#545454"/>
<g fill="none" stroke="#e0e0e0"><rect x="1175" y="513" width="9" height="5" rx="2" fill="#e0e0e0"/><rect x="1175" y="521" width="9" height="5" rx="2" fill="#e0e0e0"/><path d="M1185 515H1187.500V524H1185"/></g>
<text x="1265" y="523" text-anchor="middle">Use Nodes</text>
<text x="1226" y="559" text-anchor="end" style="fill:#cfcfcf">Color</text>
<rect x="1236" y="546" width="87" height="19" rx="4" fill="#2d4233"/>
<circle cx="1334" cy="555" r="2" fill="#d6d6d6"/>

<!-- timeline -->
<rect y="658" width="1122" height="50" rx="6" fill="#1d1d1d"/>
<path d="M0 664Q0 658 6 658H1116Q1122 658 1122 664V684H0z" fill="#303030"/>
<rect x="8" y="663" width="33" height="18" rx="4" fill="#252525" stroke="#3c3c3c"/>
<circle cx="20" cy="672" r="6.500" fill="#e6e6e6"/><path d="M20 672V666.500A5.500 5.500 0 0 1 25 672z" fill="#252525"/><use href="#ch" x="34" y="672"/>
<rect x="46" y="663" width="133" height="18" rx="4" fill="#252525" stroke="#3c3c3c"/>
<path d="M118.500 663V681" stroke="#3c3c3c"/>
<text x="53" y="676">Playback</text><use href="#ch" x="112" y="672"/>
<text x="126" y="676">Keying</text><use href="#ch" x="172" y="672"/>
<text x="189" y="676">View</text><text x="229" y="676">Marker</text>
<rect x="468" y="663" width="40" height="19" rx="4" fill="#3c3c3c"/><rect x="468" y="663" width="20" height="19" rx="4" fill="#545454"/>
<circle cx="478" cy="672.500" r="3.800" fill="#e0e0e0"/><use href="#ch" x="498" y="672.500" opacity=".5"/>
<rect x="514" y="663" width="118" height="19" rx="4" fill="#545454"/>
<path d="M523 667V678M531 667V678L525 672.500z" fill="#e6e6e6" stroke="#e6e6e6"/>
<path d="M539 668.500 543 672.500 539 676.500 535 672.500zM552 668V677L546 672.500z" fill="#e6e6e6"/>
<path d="M568 666V679L558 672.500z" fill="#e6e6e6"/><path d="M578 666V679L588 672.500z" fill="#e6e6e6"/>
<path d="M596 668V677L602 672.500zM607 668.500 611 672.500 607 676.500 603 672.500z" fill="#e6e6e6"/>
<path d="M618 667V678L624 672.500zM627 667V678" fill="#e6e6e6" stroke="#e6e6e6"/>
<rect x="836" y="663" width="75" height="19" rx="4" fill="#545454"/>
<text x="872" y="676" text-anchor="middle">4</text>
<rect x="917" y="663" width="198" height="19" rx="4" fill="#545454"/>
<rect x="917" y="663" width="20" height="19" rx="4" fill="#3c3c3c"/>
<circle cx="926.500" cy="673.500" r="5.500" fill="none" stroke="#ddd"/><path d="M926.500 670V673.500H929M924 666H929" fill="none" stroke="#ddd"/>
<path d="M1027.500 663V682" stroke="#3c3c3c"/>
<text x="951" y="676">Start</text><text x="1014" y="676" text-anchor="end">1</text>
<text x="1043" y="676">End</text><text x="1102" y="676" text-anchor="end">250</text>
<g clip-path="url(#rul)" style="font-size:11px">
<text x="38" y="700" text-anchor="middle" class="dim">0</text><text x="121" y="700" text-anchor="middle" class="dim">20</text><text x="204" y="700" text-anchor="middle" class="dim">40</text><text x="288" y="700" text-anchor="middle" class="dim">60</text><text x="371" y="700" text-anchor="middle" class="dim">80</text><text x="454" y="700" text-anchor="middle" class="dim">100</text><text x="538" y="700" text-anchor="middle" class="dim">120</text><text x="621" y="700" text-anchor="middle" class="dim">140</text><text x="705" y="700" text-anchor="middle" class="dim">160</text><text x="788" y="700" text-anchor="middle" class="dim">180</text><text x="871" y="700" text-anchor="middle" class="dim">200</text><text x="955" y="700" text-anchor="middle" class="dim">220</text><text x="1038" y="700" text-anchor="middle" class="dim">240</text>
<rect x="43" y="687" width="23" height="12" rx="3" fill="#4772b3"/><text x="54" y="700" text-anchor="middle" style="fill:#fff">4</text>
</g>
<rect x="9" y="697" width="1106" height="9" rx="4.500" fill="#545454"/>
<circle cx="13" cy="701.500" r="3" fill="#333"/><circle cx="1110" cy="701.500" r="3" fill="#333"/>
<rect x="53.500" y="704" width="1" height="4" fill="#4772b3"/>

<!-- status bar -->
<rect y="708" width="1360" height="20" fill="#1d1d1d"/>
<use href="#mouse" x="17" y="718"/><rect x="13" y="712" width="4" height="6" fill="#9a9a9a"/>
<text class="dim" x="34" y="722">Select</text>
<use href="#mouse" x="295" y="718"/><rect x="294" y="713" width="2" height="5" fill="#9a9a9a"/>
<text class="dim" x="312" y="722">Rotate View</text>
<use href="#mouse" x="573" y="718"/><rect x="573" y="712" width="4" height="6" fill="#9a9a9a"/>
<text class="dim" x="590" y="722">Call Menu</text>
<text x="1322" y="722" style="fill:#7e7e7e">3.4.1</text>

<!-- taskbar -->
<rect y="728" width="1360" height="40" fill="url(#tb)"/>
<g fill="#fff"><path d="M16 741.500 22.800 740.500V747.500H16zM23.800 740.300 32 739V747.500H23.800zM16 748.500H22.800V755.500L16 754.500zM23.800 748.500H32V757L23.800 755.700z"/></g>
<rect x="48.500" y="728.500" width="287" height="39" fill="#34474f" stroke="#6a7c84"/>
<circle cx="71" cy="745" r="5.800" fill="none" stroke="#fff" stroke-width="1.100"/><path d="M67 749.500 60.500 756" stroke="#fff" stroke-width="1.200"/>
<text class="w" x="88" y="754" style="font-size:14.500px;fill:#e8eef0">Pesquisar</text>
<g clip-path="url(#sb)">
<path d="M256 768 268 754 282 745 297 733 305 743 318 747 336 762V768z" fill="#6b8a2b"/>
<path d="M282 745 297 733 305 743 318 747 326 754 300 752z" fill="#7f9a3c"/>
<path d="M268 768 282 760 296 758M284 768 298 762 316 766M296 768 314 768M300 755 322 760" fill="none" stroke="#cfc9a4" stroke-width="2"/>
<path d="M295 755V746L298 750H307L310 745V755z" fill="#a9a9a4"/>
</g>
<g fill="none" stroke="#fff" stroke-width="1.100"><path d="M353 741H366M353 756H366"/><rect x="354.500" y="744" width="10" height="9"/></g><path d="M368 742V744M368 747V749M368 752V754" stroke="#fff" stroke-width="1.600"/>
<!-- edge -->
<circle cx="411" cy="748" r="12" fill="#1a8fd6"/><path d="M401 744C404 736 418 735 422 744 424 750 420 752 415 752 410 752 409 748 413 746 408 744 403 746 401 752z" fill="#3ecf9a"/><path d="M405 757C402 750 405 745 411 744 406 748 408 757 416 757 418 757 420 756 421 755 417 761 409 761 405 757z" fill="#0f5da8"/>
<!-- snip -->
<ellipse cx="461" cy="746" rx="11.500" ry="8.500" fill="#e8e3e3" stroke="#c0323c" stroke-width="1.600" transform="rotate(-20 461 746)"/><path d="M461 738 463 750M468 739 463 750M455 741 463 750" stroke="#999"/><circle cx="463" cy="756" r="2.500" fill="none" stroke="#1e8ed8" stroke-width="1.500"/><circle cx="469" cy="754" r="2.500" fill="none" stroke="#1e8ed8" stroke-width="1.500"/>
<!-- chrome -->
<circle cx="509" cy="748" r="12" fill="#ea4335"/><path d="M509 748 519.400 742A12 12 0 0 1 503 758.400z" fill="#fbbc05"/><path d="M509 748 503 758.400A12 12 0 0 1 498.600 742z" fill="#34a853"/><circle cx="509" cy="748" r="5.500" fill="#fff"/><circle cx="509" cy="748" r="4.300" fill="#4285f4"/>
<rect x="489" y="766" width="40" height="2" fill="#76b9ed"/>
<!-- explorer -->
<path d="M547 738H556L558 741H568V757H547z" fill="#f2c14e"/><rect x="547" y="743" width="21" height="14" fill="#fbd96b"/><path d="M551 750 557.500 745 564 750H562V757H553V750z" fill="#2a8fd8"/>
<!-- spotify -->
<circle cx="607" cy="748" r="12" fill="#1ed760"/><path d="M600 743.500C604 742 610 742.500 614 745M601 748C604.500 747 609 747.500 612.500 749.500M602 752C605 751.500 608 752 610.500 753.500" fill="none" stroke="#111" stroke-width="1.900" stroke-linecap="round"/>
<!-- app -->
<rect x="645" y="737" width="23" height="23" rx="4" fill="#26292c"/><path d="M652 754 658 743M657 754 663 743M650 749H664" stroke="#e6c76a" stroke-width="1.700"/><path d="M654 755 660 744" stroke="#69a8d8" stroke-width="1.300"/>
<rect x="637" y="766" width="39" height="2" fill="#76b9ed"/>
<!-- discord -->
<circle cx="705" cy="748" r="12" fill="#5865f2"/><path d="M698 743C702 741 708 741 712 743 714 747 714.500 751 714 754 712.500 755 711 755.500 710 755.500L709 753.500H701L700 755.500C699 755.500 697.500 755 696 754 695.500 751 696 747 698 743z" fill="#fff"/><circle cx="701.800" cy="749" r="1.500" fill="#5865f2"/><circle cx="708.200" cy="749" r="1.500" fill="#5865f2"/>
<rect x="685" y="766" width="40" height="2" fill="#76b9ed"/>
<!-- blender -->
<rect x="730" y="728" width="48" height="40" fill="#4a626e"/>
<path d="M743 750 750 744 746 744 755 738C760 739 764 743 764 748 764 753 760 757 755 757 751 757 748 754 748 751L745 754 742 752z" fill="#ea7600"/><circle cx="756" cy="748" r="4.600" fill="#fff"/><circle cx="756" cy="748" r="2.900" fill="#265787"/>
<rect x="730" y="766" width="48" height="2" fill="#76b9ed"/>
<!-- tray -->
<circle cx="983" cy="744" r="5" fill="#f2a33a"/><path d="M968 758C964 757 965 751 970 751 971 746 978 745 981 749 986 748 990 752 989 755 989 757 987 758 986 758z" fill="#c8dcf0"/>
<text class="w" x="999" y="753" style="font-size:14px;fill:#fff">18°C</text><text class="w" x="1036" y="753" style="font-size:14px;fill:#fff">Pred. nublado</text>
<path d="M1147 752 1152.500 746 1158 752" fill="none" stroke="#fff" stroke-width="1.200"/>
<rect x="1172.500" y="743.500" width="7" height="9" rx="2" fill="none" stroke="#e8e8e8"/><path d="M1180 746 1183 744.500V751.500L1180 750zM1172 741C1174 739.500 1177 739.500 1179 741M1172 755C1174 756.500 1177 756.500 1179 755" fill="none" stroke="#e8e8e8" stroke-width=".9"/>
<rect x="1197.500" y="741.500" width="12" height="9" fill="none" stroke="#e8e8e8"/><rect x="1194.500" y="739.500" width="5" height="5" fill="#1f3345" stroke="#e8e8e8"/><path d="M1203.500 751V755M1199 755.500H1208" stroke="#e8e8e8"/>
<path d="M1218 745.500H1221L1225 742V755L1221 751.500H1218zM1228 745C1229.500 747 1229.500 750 1228 752M1231 743C1233 746 1233 751 1231 754" fill="none" stroke="#e8e8e8"/>
<text class="w" x="1271" y="743" text-anchor="middle" style="font-size:12px;fill:#fff">18:17</text>
<text class="w" x="1271" y="761" text-anchor="middle" style="font-size:12px;fill:#fff">18/04/2023</text>
<path d="M1320 740H1334V751H1327L1324 754V751H1320z" fill="#fff"/><path d="M1322.500 743H1331.500M1322.500 745.500H1331.500M1322.500 748H1329" stroke="#1b2d45"/>
<circle cx="1335" cy="756" r="7.500" fill="#3a4450" stroke="#aeb4ba"/>
<text class="w" x="1335" y="760.500" text-anchor="middle" style="font-size:12px;fill:#fff">1</text>
<path d="M1359.500 728V768" stroke="#6a7c84"/>
</svg>
</body></html>
